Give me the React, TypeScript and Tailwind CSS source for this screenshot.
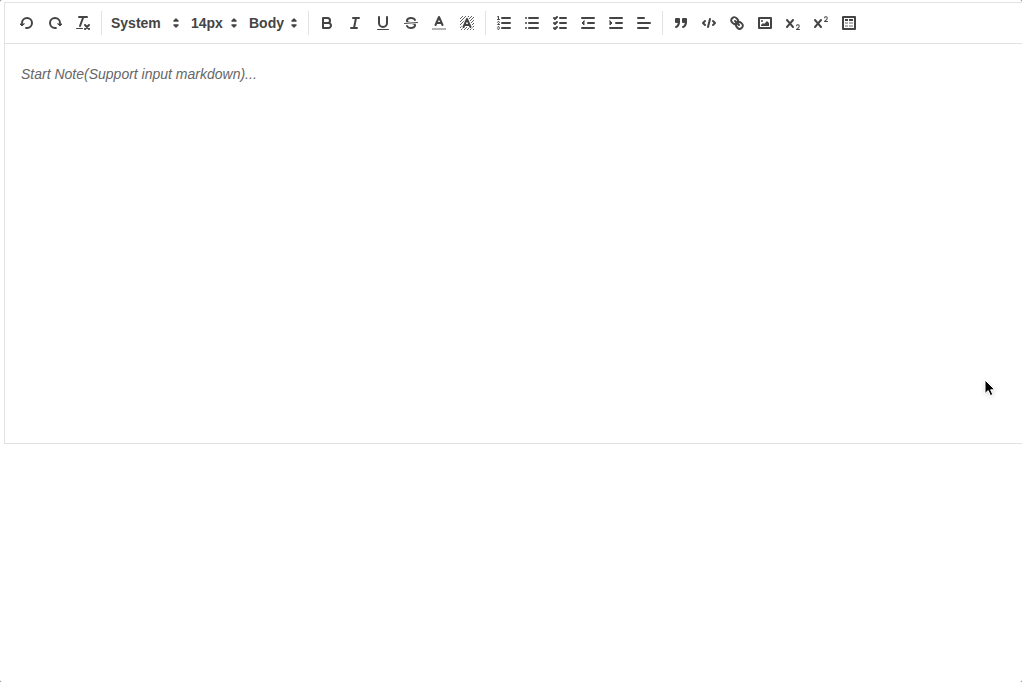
import React from 'react'

interface Tool {
  label: string
  icon: React.ReactNode
}

interface Picker {
  label: string
  options: string[]
  width: string
}

const cross =
  'M9.65,5.241a1,1,0,0,0-1.409.108L6,7.964,3.759,5.349A1,1,0,0,0,2.192,6.592Q2.215,6.621,2.241,6.649L4.684,9.5,2.241,12.35A1,1,0,0,0,3.71,13.707q.026-.028.049-.057L6,11.036,8.241,13.65a1,1,0,1,0,1.567-1.243Q9.785,12.378,9.759,12.35L7.316,9.5,9.759,6.651A1,1,0,0,0,9.65,5.241Z'

const historyTools: Tool[] = [
  {
    label: 'Undo',
    icon: (
      <>
        <polygon fill="currentColor" strokeWidth="1" points="6 10 4 12 2 10 6 10" />
        <path d="M8.09,13.91A4.6,4.6,0,0,0,9,14,5,5,0,1,0,4,9" />
      </>
    ),
  },
  {
    label: 'Redo',
    icon: (
      <>
        <polygon fill="currentColor" strokeWidth="1" points="12 10 14 12 16 10 12 10" />
        <path d="M9.91,13.91A4.6,4.6,0,0,1,9,14a5,5,0,1,1,5-5" />
      </>
    ),
  },
  {
    label: 'Clear formatting',
    icon: (
      <>
        <path d="M5,3H13M6,12L9.35,3M11,11L15,15M15,11L11,15" />
        <rect fill="currentColor" stroke="none" x="2" y="14" width="7" height="1" rx="0.5" />
      </>
    ),
  },
]

const pickers: Picker[] = [
  { label: 'Font', options: ['System', 'Arial', 'Georgia'], width: 'w-20' },
  { label: 'Size', options: ['14px', '16px', '18px'], width: 'w-[58px]' },
  { label: 'Heading', options: ['Body', 'H1', 'H2', 'H3'], width: 'w-15' },
]

const formatTools: Tool[] = [
  {
    label: 'Bold',
    icon: (
      <>
        <path d="M5,4H9.5A2.5,2.5,0,0,1,12,6.5v0A2.5,2.5,0,0,1,9.5,9H5V4Z" />
        <path d="M5,9h5.5A2.5,2.5,0,0,1,13,11.5v0A2.5,2.5,0,0,1,10.5,14H5V9Z" />
      </>
    ),
  },
  { label: 'Italic', icon: <path d="M7,4H13M5,14H11M8,14L10,4" /> },
  {
    label: 'Underline',
    icon: (
      <>
        <path d="M5,3V9a4.012,4.012,0,0,0,4,4H9a4.012,4.012,0,0,0,4-4V3" />
        <rect fill="currentColor" stroke="none" x="3" y="15" width="12" height="1" rx="0.5" />
      </>
    ),
  },
  {
    label: 'Strikethrough',
    icon: (
      <>
        <path strokeWidth="1" d="M15.5,8.5L2.5,9.5" />
        <g fill="currentColor" stroke="none">
          <path d="M9.007,8C6.542,7.791,6,7.519,6,6.5,6,5.792,7.283,5,9,5c1.571,0,2.765.679,2.969,1.309a1,1,0,0,0,1.9-.617C13.356,4.106,11.354,3,9,3,6.2,3,4,4.538,4,6.5a3.2,3.2,0,0,0,.5,1.843Z" />
          <path d="M8.984,10C11.457,10.208,12,10.479,12,11.5c0,.708-1.283,1.5-3,1.5-1.571,0-2.765-.679-2.969-1.309a1,1,0,1,0-1.9.617C4.644,13.894,6.646,15,9,15c2.8,0,5-1.538,5-3.5a3.2,3.2,0,0,0-.5-1.843Z" />
        </g>
      </>
    ),
  },
  {
    label: 'Text color',
    icon: (
      <>
        <path opacity="0.4" strokeLinecap="butt" d="M2,15H16" />
        <path d="M5.5,11L9,3L12.5,11M11.63,9H6.38" />
      </>
    ),
  },
  {
    label: 'Highlight color',
    icon: (
      <>
        <defs>
          <pattern id="hatch" width="3" height="3" x="2" y="2" patternUnits="userSpaceOnUse">
            <path
              fill="currentColor"
              stroke="none"
              d="M2,0h1v1h-1zM1,1h1v1h-1zM0,2h1v1h-1z"
            />
          </pattern>
        </defs>
        <rect
          fill="url(#hatch)"
          stroke="none"
          opacity="0.85"
          x="2"
          y="2"
          width="14"
          height="14"
        />
        <path stroke="white" strokeWidth="4" d="M5.5,13L9,5L12.5,13M11.63,11H6.38" />
        <path d="M5.5,13L9,5L12.5,13M11.63,11H6.38" />
      </>
    ),
  },
]

const blockTools: Tool[] = [
  {
    label: 'Ordered list',
    icon: (
      <>
        <path d="M7,4H15M7,9H15M7,14H15" />
        <g strokeWidth="1">
          <path d="M2.5,5.5H4.5" />
          <path d="M4.5,10.5h-2c0-.234,1.85-1.076,1.85-2.234A0.959,0.959,0,0,0,2.5,8.156" />
          <path d="M2.5,14.846a0.959,0.959,0,0,0,1.85-.109A0.7,0.7,0,0,0,3.75,14a0.688,0.688,0,0,0,.6-0.736,0.959,0.959,0,0,0-1.85-.109" />
        </g>
        <path
          fill="currentColor"
          stroke="none"
          d="M3.5,6A0.5,0.5,0,0,1,3,5.5V3.085l-0.276.138A0.5,0.5,0,0,1,2.053,3c-0.124-.247-0.023-0.324.224-0.447l1-.5A0.5,0.5,0,0,1,4,2.5v3A0.5,0.5,0,0,1,3.5,6Z"
        />
      </>
    ),
  },
  {
    label: 'Bullet list',
    icon: <path d="M6,4H15M6,9H15M6,14H15M3,4H3M3,9H3M3,14H3" />,
  },
  {
    label: 'Check list',
    icon: <path d="M9,4H15M9,9H15M9,14H15M3,4L4,5L6,3M3,9L4,10L6,8M3,14L4,15L6,13" />,
  },
  {
    label: 'Outdent',
    icon: (
      <>
        <path d="M3,14H15M3,4H15M9,9H15" />
        <polygon fill="currentColor" strokeWidth="1" points="5 7 5 11 3 9 5 7" />
      </>
    ),
  },
  {
    label: 'Indent',
    icon: (
      <>
        <path d="M3,14H15M3,4H15M9,9H15" />
        <polygon fill="currentColor" strokeWidth="1" points="3 7 3 11 5 9 3 7" />
      </>
    ),
  },
  { label: 'Align', icon: <path d="M3,9H15M3,14H13M3,4H9" /> },
]

const insertTools: Tool[] = [
  {
    label: 'Blockquote',
    icon: (
      <>
        <rect fill="currentColor" x="4" y="5" width="3" height="3" />
        <rect fill="currentColor" x="11" y="5" width="3" height="3" />
        <path fill="currentColor" d="M7,8c0,4.031-3,5-3,5" />
        <path fill="currentColor" d="M14,8c0,4.031-3,5-3,5" />
      </>
    ),
  },
  { label: 'Code', icon: <path d="M5,7L3,9L5,11M13,7L15,9L13,11M10,5L8,13" /> },
  {
    label: 'Link',
    icon: (
      <>
        <path d="M7,7L11,11" />
        <path d="M8.9,4.577a3.476,3.476,0,0,1,.36,4.679A3.476,3.476,0,0,1,4.577,8.9C3.185,7.5,2.035,6.4,4.217,4.217S7.5,3.185,8.9,4.577Z" />
        <path d="M13.423,9.1a3.476,3.476,0,0,0-4.679-.36,3.476,3.476,0,0,0,.36,4.679c1.392,1.392,2.5,2.542,4.679.36S14.815,10.5,13.423,9.1Z" />
      </>
    ),
  },
  {
    label: 'Image',
    icon: (
      <>
        <rect x="3" y="4" width="12" height="10" />
        <g fill="currentColor" stroke="none">
          <circle cx="6" cy="7" r="1" />
          <polygon points="5 12 5 11 7 9 8 10 11 7 13 9 13 12 5 12" />
        </g>
      </>
    ),
  },
  {
    label: 'Subscript',
    icon: (
      <g fill="currentColor" stroke="none">
        <path d="M15.5,15H13.861a3.858,3.858,0,0,0,1.914-2.975,1.8,1.8,0,0,0-1.6-1.751A1.921,1.921,0,0,0,12.021,11.7a.5.5,0,1,0,.957.291h0a.914.914,0,0,1,1.053-.725.81.81,0,0,1,.744.762c0,1.076-1.17,1.87-1.94,2.431A1.456,1.456,0,0,0,12,15.5a.5.5,0,0,0,.5.5h3A.5.5,0,0,0,15.5,15Z" />
        <path d={cross} />
      </g>
    ),
  },
  {
    label: 'Superscript',
    icon: (
      <g fill="currentColor" stroke="none">
        <path d="M15.5,7H13.861a4.015,4.015,0,0,0,1.914-2.975,1.8,1.8,0,0,0-1.6-1.751A1.922,1.922,0,0,0,12.021,3.7a.5.5,0,1,0,.957.291.917.917,0,0,1,1.053-.725.81.81,0,0,1,.744.762c0,1.077-1.164,1.925-1.934,2.486A1.423,1.423,0,0,0,12,7.5a.5.5,0,0,0,.5.5h3A.5.5,0,0,0,15.5,7Z" />
        <path d={cross} />
      </g>
    ),
  },
  {
    label: 'Table',
    icon: (
      <>
        <rect x="3" y="3" width="12" height="12" />
        <g fill="currentColor" stroke="none">
          <path d="M5,5h3v2h-3zM9,5h4v2h-4z" />
          <path opacity="0.4" d="M5,8h3v2h-3zM9,8h4v2h-4zM5,11h3v2h-3zM9,11h4v2h-4z" />
        </g>
      </>
    ),
  },
]

function Icon({ children }: { children: React.ReactNode }) {
  return (
    <svg
      viewBox="0 0 18 18"
      className="size-[18px]"
      fill="none"
      stroke="currentColor"
      strokeWidth="2"
      strokeLinecap="round"
      strokeLinejoin="round"
      aria-hidden="true"
    >
      {children}
    </svg>
  )
}

function ToolGroup({ tools }: { tools: Tool[] }) {
  return (
    <div className="flex">
      {tools.map(({ label, icon }) => (
        <button
          key={label}
          type="button"
          aria-label={label}
          className="flex h-6 w-7 items-center justify-center hover:text-sky-600"
        >
          <Icon>{icon}</Icon>
        </button>
      ))}
    </div>
  )
}

function Divider() {
  return <div className="mx-1 h-6 w-px bg-[#e2e2e2]" />
}

function PickerGroup() {
  return (
    <div className="flex">
      {pickers.map(({ label, options, width }) => (
        <div key={label} className={`relative h-6 ${width}`}>
          <select
            aria-label={label}
            className="h-6 w-full appearance-none bg-transparent pl-[5px] text-sm leading-6 font-bold"
          >
            {options.map((option) => (
              <option key={option}>{option}</option>
            ))}
          </select>
          <div className="pointer-events-none absolute top-[3px] right-px">
            <Icon>
              <g fill="currentColor" strokeWidth="1.5">
                <polygon points="7 11 9 13 11 11 7 11" />
                <polygon points="7 7 9 5 11 7 7 7" />
              </g>
            </Icon>
          </div>
        </div>
      ))}
    </div>
  )
}

function Pointer() {
  return (
    <svg
      viewBox="0 0 14 20"
      className="pointer-events-none absolute top-[379px] left-[984px] h-5 w-3.5 drop-shadow-sm"
      aria-hidden="true"
    >
      <path
        d="M1,1V14.5L4.2,11.6L6.4,16.6L8.8,15.5L6.6,10.8H10.8Z"
        fill="black"
        stroke="white"
        strokeWidth="1"
      />
    </svg>
  )
}

function App() {
  return (
    <main className="min-h-screen bg-neutral-500 font-['Helvetica_Neue','Liberation_Sans',Arial,sans-serif]">
      <div className="relative min-h-screen rounded-xs bg-white pt-0.5 pl-1">
        <div className="border-y border-l border-[#e2e2e2]">
          <div
            role="toolbar"
            aria-label="Formatting"
            className="flex items-center border-b border-[#e2e2e2] p-2 text-[#444]"
          >
            <ToolGroup tools={historyTools} />
            <Divider />
            <PickerGroup />
            <Divider />
            <ToolGroup tools={formatTools} />
            <Divider />
            <ToolGroup tools={blockTools} />
            <Divider />
            <ToolGroup tools={insertTools} />
          </div>
          <textarea
            aria-label="Note"
            placeholder="Start Note(Support input markdown)..."
            className="block h-[399px] w-full resize-none px-4 py-5 text-sm leading-5 outline-none placeholder:text-[#666] placeholder:italic"
          />
        </div>
        <Pointer />
      </div>
    </main>
  )
}

export default App
